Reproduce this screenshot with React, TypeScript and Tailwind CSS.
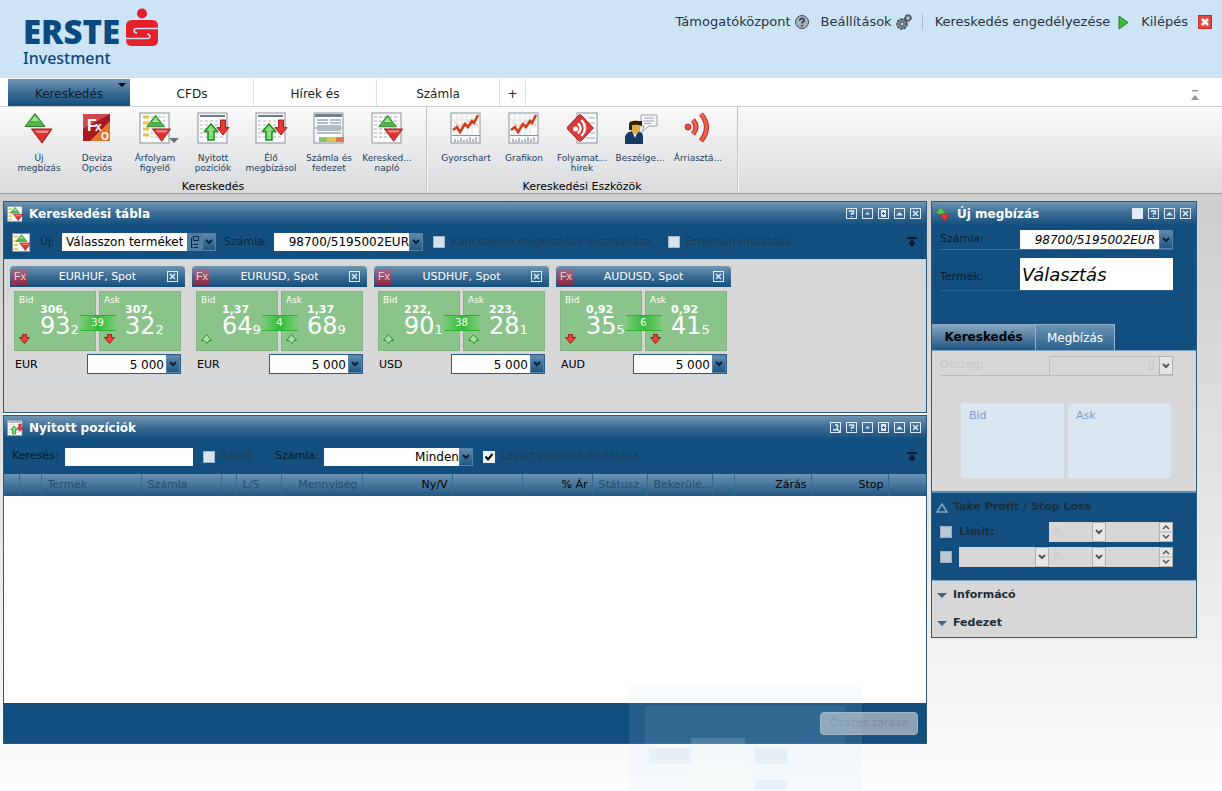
import type { ReactNode } from 'react';

const BLUE_BAR = 'bg-linear-to-b from-[#7096b3] via-[#3a6c94] to-[#124f7e]';

function Triangles() {
  return (
    <>
      <path d="M12 1.500 22 14.500H2z" fill="#4fb64c" stroke="#2a7d2a" strokeWidth="1" />
      <path d="M12 4 16 9 8 9z" fill="#a5e39b" />
      <path d="M8.500 17H29L19 31z" fill="#dd3030" stroke="#a01818" strokeWidth="1" />
      <path d="M12 18.500H26L24 21H14z" fill="#f58a80" />
    </>
  );
}

function Sheet({ children }: { children?: ReactNode }) {
  return (
    <>
      <rect x="1" y="1" width="29" height="30" fill="#fafafa" stroke="#8b9199" />
      {children}
    </>
  );
}

function PositionArrows() {
  return (
    <>
      <path d="M3 4H28" stroke="#6f7780" strokeWidth="2" />
      <path d="M3 9H28M3 13H28M3 17H28M3 21H28M3 25H28" stroke="#b3b8be" strokeDasharray="3 2" />
      <path d="M14 12 20.500 19.500H17V28H11V19.500H7.500z" fill="#86dd76" stroke="#1f8a24" strokeWidth="1.500" />
      <path d="M23.500 8H28.500V15.500H32L26 23 20 15.500H23.500z" fill="#e23a34" stroke="#a81d1d" />
    </>
  );
}

function ChartIcon() {
  return (
    <Sheet>
      <path d="M7 2V23M12 2V23M17 2V23M22 2V23M2 8H30M2 14H30" stroke="#dde1e5" />
      <path d="M4 10 10 14 18 9 28 13" fill="none" stroke="#f2b98a" />
      <path d="M3 18 7 15 10 20 15 12 18 15 22 9 24 11 28 3" fill="none" stroke="#cf3a1c" strokeWidth="2.500" />
      <path d="M2 23.500H30" stroke="#8b9199" />
      <path d="M5 30V27M8 30V28M11 30V26M14 30V28M17 30V27M20 30V25M23 30V27M26 30V25" stroke="#6f7c8a" />
    </Sheet>
  );
}

function ToolIcon({ name }: { name: string }) {
  return (
    <svg viewBox="0 0 36 32" className="h-8 w-9 shrink-0" aria-hidden="true">
      <g transform="translate(2 0)">
        {name === 'order' && <Triangles />}
        {name === 'fx' && (
          <>
            <rect x="2" y="2" width="27" height="27" fill="#a91722" />
            <path d="M2 2H29L2 17z" fill="#cf4a4e" />
            <path d="M29 9V29H9z" fill="#e8742c" />
            <text x="6" y="19" fontSize="16" fontWeight="700" fill="#fff" fontFamily="Liberation Sans, sans-serif">F</text>
            <text x="14" y="19" fontSize="12" fontWeight="700" fill="#fff" fontFamily="Liberation Sans, sans-serif">x</text>
            <text x="20" y="28" fontSize="10" fontWeight="700" fill="#fff" fontFamily="Liberation Sans, sans-serif">O</text>
          </>
        )}
        {name === 'watch' && (
          <Sheet>
            <path d="M4 5H10M4 11H10M4 17H10M4 23H10" stroke="#eac24a" strokeWidth="3" />
            <path d="M12 5H28M12 9H28M12 13H28M12 17H28M12 21H28M12 25H28" stroke="#a8adb3" strokeDasharray="2 2" />
            <g transform="translate(6 2) scale(0.880)"><Triangles /></g>
          </Sheet>
        )}
        {name === 'positions' && <Sheet><PositionArrows /></Sheet>}
        {name === 'account' && (
          <Sheet>
            <rect x="2" y="2" width="27" height="3" fill="#70808f" />
            <path d="M4 8H15M17 8H28M4 11H15M17 11H28M4 14H28M4 18H28M4 21H28" stroke="#9ba8b5" strokeWidth="1.500" />
            <path d="M2 16H29" stroke="#64788c" />
            <rect x="6" y="25" width="8" height="5" fill="#86c763" />
            <rect x="14" y="25" width="9" height="5" fill="#e3c64e" />
            <rect x="23" y="25" width="8" height="5" fill="#dd7a52" />
          </Sheet>
        )}
        {name === 'log' && (
          <Sheet>
            <path d="M3 5H28M3 9H28M3 13H28M3 17H28M3 21H28M3 25H28" stroke="#a4aab1" strokeDasharray="3 2" />
            <g transform="translate(6 2) scale(0.880)"><Triangles /></g>
          </Sheet>
        )}
        {name === 'chart' && <ChartIcon />}
        {name === 'news' && (
          <>
            <rect x="11" y="1" width="20" height="30" fill="#fafafa" stroke="#8b9199" />
            <path d="M23 6H29M24 11H29M26 16H29M24 21H29M20 26H29" stroke="#a4aab1" />
            <path d="M12.500 3.500Q14 2 15.500 3.500L26 14.500Q27.500 16 26 17.500L15.500 28.500Q14 30 12.500 28.500L2 17.500Q.5 16 2 14.500z" fill="#d93a3a" stroke="#a01f22" />
            <circle cx="9.500" cy="17" r="2.500" fill="#fff" />
            <path d="M12 11.500Q17 16 12 21.500M15.500 8Q22.500 16 15.500 24" fill="none" stroke="#fff" strokeWidth="2.500" />
          </>
        )}
        {name === 'chat' && (
          <>
            <path d="M17 3H33V14H25L18 20 20 14H17z" fill="#f3f4f5" stroke="#9da2a8" />
            <path d="M20 6H30M20 9H30M20 11.500H27" stroke="#9da2a8" />
            <path d="M1 32V25Q2 20 8 19H14Q19 20 19 25V32z" fill="#173c63" />
            <path d="M8 19 11 26 14 19z" fill="#e8eef3" />
            <ellipse cx="11.500" cy="15" rx="5" ry="7" fill="#e0a64a" />
            <path d="M5 18V12Q5 9 10 9H18V14Q14 12 8 13V18z" fill="#2d2410" />
          </>
        )}
        {name === 'alert' && (
          <>
            <circle cx="6" cy="15" r="3" fill="#e25247" stroke="#b32a22" />
            <path d="M11 8Q17 15 11 22" fill="none" stroke="#b9301f" strokeWidth="5" />
            <path d="M11 8Q17 15 11 22" fill="none" stroke="#ee6152" strokeWidth="3" />
            <path d="M19 2Q30 15 19 29" fill="none" stroke="#b9301f" strokeWidth="5" />
            <path d="M19 2Q30 15 19 29" fill="none" stroke="#ee6152" strokeWidth="3" />
          </>
        )}
      </g>
    </svg>
  );
}

type SmallIconKind = 'watch' | 'positions' | 'order';

function SmallIcon({ kind, large }: { kind: SmallIconKind; large?: boolean }) {
  return (
    <svg viewBox="0 0 32 32" className={large ? 'h-[19px] w-[19px] shrink-0' : 'h-4 w-4 shrink-0'} aria-hidden="true">
      {kind === 'watch' && (
        <Sheet>
          <path d="M3 6H10M3 13H10M3 20H10M3 27H10" stroke="#eac24a" strokeWidth="3" />
          <g transform="translate(5 1) scale(0.920)"><Triangles /></g>
        </Sheet>
      )}
      {kind === 'positions' && <Sheet><PositionArrows /></Sheet>}
      {kind === 'order' && (
        <>
          <path d="M11 3 21 14 11 17 2 14z" fill="#5cc453" stroke="#2a7d2a" />
          <path d="M10 18 19 15 28 18 19 30z" fill="#e23a34" stroke="#a01818" />
        </>
      )}
    </svg>
  );
}

type GlyphName = 'reset' | 'help' | 'up' | 'plus' | 'fold' | 'close' | 'blank';

function WindowButton({ glyph, label }: { glyph: GlyphName; label: string }) {
  return (
    <button type="button" aria-label={label} className="h-[11px] w-[11px]">
      <svg viewBox="0 0 11 11" className="h-full w-full" fill="none" stroke="#dcebf7">
        <rect x=".5" y=".5" width="10" height="10" fill={glyph === 'blank' ? '#e4eaf0' : 'none'} />
        {glyph === 'reset' && <path d="M3 7.500Q7 9 7.500 5.500T5 3M7 7L10 10" strokeWidth="1.500" />}
        {glyph === 'help' && <path d="M3.500 4V3H7.500V5.500H5.500V7M5.500 8V9" strokeWidth="1.300" />}
        {glyph === 'up' && <path d="M3 6.500H8L5.500 4z" fill="#dcebf7" stroke="none" />}
        {glyph === 'plus' && (
          <>
            <path d="M3 2H8V9H3z" fill="#dcebf7" stroke="none" />
            <path d="M4 5.500H7M5.500 4V7" stroke="#1d5683" />
          </>
        )}
        {glyph === 'fold' && <path d="M2 7.500H9L5.500 4z" fill="#dcebf7" stroke="none" />}
        {glyph === 'close' && <path d="M3 3 8 8M8 3 3 8" strokeWidth="1.500" />}
      </svg>
    </button>
  );
}

const glyphLabels: Record<GlyphName, string> = {
  reset: 'Visszaállítás',
  help: 'Súgó',
  up: 'Kis méret',
  plus: 'Új ablak',
  fold: 'Összecsukás',
  close: 'Bezárás',
  blank: 'Csoport',
};

function TitleBar({ icon, title, glyphs }: { icon: SmallIconKind; title: string; glyphs: GlyphName[] }) {
  return (
    <header className={`flex h-[23px] items-center gap-1.5 pr-[5px] pl-[3px] ${BLUE_BAR}`}>
      <SmallIcon kind={icon} />
      <h2 className="flex-1 text-[12px] font-bold text-white">{title}</h2>
      <div className="flex gap-[5px]">
        {glyphs.map((glyph) => (
          <WindowButton key={glyph} glyph={glyph} label={glyphLabels[glyph]} />
        ))}
      </div>
    </header>
  );
}

function Chevron({ dim }: { dim?: boolean }) {
  return (
    <span
      aria-hidden="true"
      className={`pointer-events-none flex w-3.5 shrink-0 items-center justify-center self-stretch border ${
        dim ? 'border-[#b4b4b4] bg-[#e6e6e6]' : 'border-[#5583a6] bg-linear-to-b from-[#5f8bad] to-[#1d5683]'
      }`}
    >
      <svg viewBox="0 0 8 6" className="h-1.5 w-2" fill="none" stroke={dim ? '#555' : '#06213c'} strokeWidth="2">
        <path d="M1 1 4 4 7 1" />
      </svg>
    </span>
  );
}

function CollapseToolbar() {
  return (
    <button type="button" aria-label="Eszköztár elrejtése" className="mr-px ml-auto">
      <svg viewBox="0 0 10 10" className="h-2.5 w-2.5" fill="#061a35">
        <path d="M0 0H10V2H0zM5 2 9 7H7V9H3V7H1z" />
      </svg>
    </button>
  );
}

function FxBadge() {
  return (
    <span className="flex h-4 w-4 items-center justify-center bg-linear-to-b from-[#a06b85] to-[#8b2648] font-['Liberation_Sans',sans-serif] text-[11px] text-[#e3d3de]">
      Fx
    </span>
  );
}

function Trend({ up }: { up: boolean }) {
  return (
    <svg viewBox="0 0 11 10" className="h-2.5 w-[11px]" aria-hidden="true">
      {up ? (
        <path d="M5.500 .5 10.500 6.500H8L6 9.500 3 6.500H.5z" fill="#a4e596" stroke="#2f8d35" />
      ) : (
        <path d="M3.500 .5H7.500V3.500H10.500L5.500 9.500 .5 3.500H3.500z" fill="#e8443a" stroke="#9c1d1a" />
      )}
    </svg>
  );
}

type Price = { big: string; mid: string; pip: string };

function PriceTile({ side, price, up }: { side: string; price: Price; up: boolean }) {
  return (
    <button type="button" className="flex h-[60px] flex-1 border border-[#86b384] bg-[#8bc48a] text-left text-white">
      <span className="flex h-full w-[25px] flex-col justify-between pt-[3px] pb-1.5 pl-1">
        <span className="text-[9px] leading-[10px]">{side}</span>
        <Trend up={up} />
      </span>
      <span className="flex flex-col pt-3">
        <span className="text-[11px] leading-[11px] font-bold">{price.big}</span>
        <span className="text-[24px] leading-[22px] whitespace-nowrap">
          {price.mid}
          <span className="text-[13px]">{price.pip}</span>
        </span>
      </span>
    </button>
  );
}

type Quote = { pair: string; currency: string; spread: string; up: boolean; bid: Price; ask: Price };

const quotes: Quote[] = [
  { pair: 'EURHUF', currency: 'EUR', spread: '39', up: false, bid: { big: '306,', mid: '93', pip: '2' }, ask: { big: '307,', mid: '32', pip: '2' } },
  { pair: 'EURUSD', currency: 'EUR', spread: '4', up: true, bid: { big: '1,37', mid: '64', pip: '9' }, ask: { big: '1,37', mid: '68', pip: '9' } },
  { pair: 'USDHUF', currency: 'USD', spread: '38', up: true, bid: { big: '222,', mid: '90', pip: '1' }, ask: { big: '223,', mid: '28', pip: '1' } },
  { pair: 'AUDUSD', currency: 'AUD', spread: '6', up: false, bid: { big: '0,92', mid: '35', pip: '5' }, ask: { big: '0,92', mid: '41', pip: '5' } },
];

function QuoteCard({ quote }: { quote: Quote }) {
  const amountId = `amount-${quote.pair}`;
  return (
    <article className="w-[175px] border-b border-[#cfdce6] pb-1">
      <header className={`flex h-[21px] items-center rounded-t-sm pr-[7px] pl-0.5 ${BLUE_BAR}`}>
        <FxBadge />
        <h3 className="flex-1 pt-0.5 text-center text-[11px] text-white">{quote.pair}, Spot</h3>
        <WindowButton glyph="close" label={glyphLabels.close} />
      </header>
      <div className="relative mt-1 flex gap-[3px] px-1">
        <PriceTile side="Bid" price={quote.bid} up={quote.up} />
        <PriceTile side="Ask" price={quote.ask} up={quote.up} />
        <span className="absolute top-6 left-1/2 h-4 w-9 -translate-x-1/2 border-y border-[#2eb22e] bg-linear-to-r from-[#7ccb7a] via-[#2bbd33] to-[#7ccb7a] text-center text-[10px] leading-[14px] text-white">
          {quote.spread}
        </span>
      </div>
      <div className="mt-[3px] flex items-center justify-between pr-1 pl-[5px]">
        <label htmlFor={amountId} className="pt-0.5 text-[11px]">{quote.currency}</label>
        <div className="flex h-5 w-[94px] border border-[#2a5d87] bg-white">
          <input id={amountId} defaultValue="5 000" className="w-full min-w-0 flex-1 px-0.5 pt-px text-right text-[12px]" />
          <Chevron />
        </div>
      </div>
    </article>
  );
}

const groups = [
  {
    title: 'Kereskedés',
    tools: [
      { icon: 'order', lines: ['Új', 'megbízás'] },
      { icon: 'fx', lines: ['Deviza', 'Opciós'] },
      { icon: 'watch', lines: ['Árfolyam', 'figyelő'], menu: true },
      { icon: 'positions', lines: ['Nyitott', 'pozíciók'] },
      { icon: 'positions', lines: ['Élő', 'megbízásol'] },
      { icon: 'account', lines: ['Számla és', 'fedezet'] },
      { icon: 'log', lines: ['Keresked...', 'napló'] },
    ],
  },
  {
    title: 'Kereskedési Eszközök',
    tools: [
      { icon: 'chart', lines: ['Gyorschart'] },
      { icon: 'chart', lines: ['Grafikon'] },
      { icon: 'news', lines: ['Folyamat...', 'hírek'] },
      { icon: 'chat', lines: ['Beszélge...'] },
      { icon: 'alert', lines: ['Árriasztá...'] },
    ],
  },
];

function Ribbon() {
  return (
    <div className="flex h-[87px] border-b border-[#9b9b9b] bg-linear-to-b from-[#fafafa] to-[#d9dadc]">
      {groups.map((group) => (
        <section key={group.title} className="flex flex-col border-r border-[#c3c6ca] px-2.5 pt-[5px] shadow-[1px_0_0_#f4f4f4]">
          <div className="flex h-[69px]">
            {group.tools.map((tool) => (
              <button key={tool.lines.join(' ')} type="button" className="relative flex w-[58px] flex-col items-center gap-[9px] text-[#1d3e5c]">
                <ToolIcon name={tool.icon} />
                <span className="text-[9px] leading-[10px] whitespace-nowrap">
                  {tool.lines.map((line) => (
                    <span key={line} className="block">{line}</span>
                  ))}
                </span>
                {'menu' in tool && (
                  <span className="absolute top-[26px] right-[5px] border-x-5 border-t-5 border-x-transparent border-t-[#6a7079]" />
                )}
              </button>
            ))}
          </div>
          <h2 className="text-center text-[11px] leading-3">{group.title}</h2>
        </section>
      ))}
    </div>
  );
}

function Logo() {
  return (
    <a href="#" aria-label="Erste Investment" className="flex items-start gap-1.5 pt-2 pl-[23px] text-[#0b4a80]">
      <span className="flex flex-col pt-1.5">
        <span className="font-['Open_Sans',sans-serif] text-[33px] leading-[36px] font-extrabold">ERSTE</span>
        <span className="font-['Noto_Sans',sans-serif] text-[16px] leading-4 font-medium">Investment</span>
      </span>
      <svg viewBox="0 0 32 38" className="h-[38px] w-8" fill="#e5202b">
        <circle cx="16" cy="5.500" r="5" />
        <path d="M6 12H26Q32 12 32 18V32Q32 38 26 38H6Q0 38 0 32V18Q0 12 6 12z" />
        <path d="M32 20.500H11Q8 20.500 8 22.500T11 25" fill="none" stroke="#cce4f6" strokeWidth="1.600" />
        <path d="M0 30.500H21Q24 30.500 24 28.500T21 26" fill="none" stroke="#cce4f6" strokeWidth="1.600" />
      </svg>
    </a>
  );
}

function TopBar() {
  return (
    <header className="flex h-[78px] items-start justify-between bg-[#cce4f6]">
      <Logo />
      <nav className="flex items-center pt-[13px] pr-2.5 text-[13px] leading-[18px] text-[#273442]">
        <a href="#" className="flex items-center gap-1">
          Támogatóközpont
          <svg viewBox="0 0 14 14" className="h-3.5 w-3.5">
            <circle cx="7" cy="7" r="6.500" fill="#a5b2be" stroke="#3f4b57" />
            <path d="M4.500 5.500Q5 3 7.500 3.500T8.500 6.500Q7 7 7 8.500M7 10V11.500" fill="none" stroke="#222c38" strokeWidth="1.500" />
          </svg>
        </a>
        <a href="#" className="ml-3 flex items-center gap-1">
          Beállítások
          <svg viewBox="0 0 16 16" className="h-4 w-4">
            <circle cx="6" cy="10" r="5" fill="#7d8894" stroke="#3b4652" strokeWidth="1.500" strokeDasharray="2.500 1" />
            <circle cx="6" cy="10" r="2" fill="#cfd9e2" stroke="#3b4652" />
            <circle cx="12" cy="4" r="3" fill="#7d8894" stroke="#3b4652" strokeWidth="1.500" strokeDasharray="2 .8" />
            <circle cx="12" cy="4" r="1" fill="#e1e9f0" />
          </svg>
        </a>
        <span className="mr-3 ml-2.5 h-4 w-px bg-[#a7bccc]" />
        <button type="button" className="flex items-center gap-2">
          Kereskedés engedélyezése
          <svg viewBox="0 0 11 15" className="h-[15px] w-[11px]">
            <path d="M1 1 10 7.500 1 14z" fill="#3fbb3b" stroke="#237f25" />
          </svg>
        </button>
        <button type="button" className="ml-3 flex items-center gap-2.5">
          Kilépés
          <svg viewBox="0 0 14 14" className="h-3.5 w-3.5">
            <rect x=".5" y=".5" width="13" height="13" fill="#e24a41" stroke="#c02a25" />
            <path d="M4 4 10 10M10 4 4 10" stroke="#fff" strokeWidth="2.500" />
          </svg>
        </button>
      </nav>
    </header>
  );
}

function WorkspaceTabs() {
  return (
    <nav className="flex h-[29px] items-stretch border-b border-[#c9ccd0] bg-white pt-px pl-2 text-[12px] text-[#222]">
      <button type="button" className={`relative mr-px w-[122px] pt-0.5 text-[#0a1c30] ${BLUE_BAR}`}>
        Kereskedés
        <span className="absolute top-1 right-1 border-x-4 border-t-4 border-x-transparent border-t-black" />
      </button>
      {['CFDs', 'Hírek és', 'Számla'].map((tab) => (
        <button key={tab} type="button" className="w-[123px] border-r border-[#d3e3ef] pt-0.5">
          {tab}
        </button>
      ))}
      <button type="button" className="w-[26px] border-r border-[#d3e3ef] pt-0.5">+</button>
      <button type="button" aria-label="Szalag elrejtése" className="mr-[23px] ml-auto pt-1">
        <svg viewBox="0 0 8 10" className="h-2.5 w-2" fill="#8996a5">
          <path d="M1 0H7V1.500H1zM4 5 8 10H0z" />
        </svg>
      </button>
    </nav>
  );
}

function TradingBoard() {
  return (
    <section className="flex h-[212px] flex-col border border-[#2b5a80] bg-[#d7d7d8]">
      <TitleBar icon="watch" title="Kereskedési tábla" glyphs={['help', 'up', 'plus', 'fold', 'close']} />
      <div className="flex h-[35px] items-center border-b border-[#b9d2e6] bg-[#124f7e] px-2 text-[11px] text-[#0a2642]">
        <SmallIcon kind="watch" large />
        <label htmlFor="product" className="w-[31px] pl-[9px]">Új:</label>
        <div className="flex h-[18px] w-[154px] items-center">
          <input id="product" defaultValue="Válasszon terméket" className="h-full w-[125px] bg-white px-1 text-[12px] text-black" />
          <button type="button" aria-label="Termékfa" className="flex h-full w-[15px] items-center justify-center bg-[#4f7fa4]">
            <svg viewBox="0 0 10 14" className="h-3.5 w-2.5" fill="none" stroke="#0b2742">
              <path d="M3 1.500H8.500V5.500H3.500zM1.500 3V13M1.500 9.500H3M1.500 12.500H3M4 9.500H8M4 12.500H8" />
            </svg>
          </button>
          <Chevron />
        </div>
        <label htmlFor="board-account" className="ml-2 w-[50px]">Számla:</label>
        <div className="flex h-[18px] w-[149px]">
          <select id="board-account" className="h-full w-[135px] appearance-none bg-white text-right text-[12px] text-black [text-align-last:right]">
            <option>98700/5195002EUR</option>
          </select>
          <Chevron />
        </div>
        <label className="ml-2.5 flex w-[235px] items-center gap-1.5 text-[#1c3b55]">
          <input type="checkbox" className="h-3 w-3 appearance-none border border-[#9db7cc] bg-[#d6e2ee]" />
          Kapcsolódó megbízások hozzáadása
        </label>
        <label className="flex items-center gap-1.5 text-[#1c3b55]">
          <input type="checkbox" className="h-3 w-3 appearance-none border border-[#9db7cc] bg-[#d6e2ee]" />
          Értéknap mutatása
        </label>
        <CollapseToolbar />
      </div>
      <div className="flex flex-wrap gap-[7px] px-1.5 pt-1.5">
        {quotes.map((quote) => (
          <QuoteCard key={quote.pair} quote={quote} />
        ))}
      </div>
    </section>
  );
}

const columns = [
  { id: 'a', width: 'w-[15px]', label: '' },
  { id: 'b', width: 'w-[22px]', label: '' },
  { id: 'c', width: 'w-[100px]', label: 'Termék', dim: true },
  { id: 'd', width: 'w-[80px]', label: 'Számla', dim: true },
  { id: 'e', width: 'w-[15px]', label: '' },
  { id: 'f', width: 'w-[45px]', label: 'L/S', dim: true },
  { id: 'g', width: 'w-[81px]', label: 'Mennyiség', dim: true, right: true },
  { id: 'h', width: 'w-[90px]', label: 'Ny/V', right: true },
  { id: 'i', width: 'w-[70px]', label: '' },
  { id: 'j', width: 'w-[70px]', label: '% Ár', right: true },
  { id: 'k', width: 'w-[55px]', label: 'Státusz', dim: true },
  { id: 'l', width: 'w-[65px]', label: 'Bekerülé...', dim: true },
  { id: 'm', width: 'w-[22px]', label: '' },
  { id: 'n', width: 'w-[77px]', label: 'Zárás', right: true },
  { id: 'o', width: 'w-[77px]', label: 'Stop', right: true },
  { id: 'p', width: '', label: '' },
];

function OpenPositions() {
  return (
    <section className="flex h-[329px] flex-col border border-[#2b5a80] bg-white">
      <TitleBar icon="positions" title="Nyitott pozíciók" glyphs={['reset', 'help', 'up', 'plus', 'fold', 'close']} />
      <div className="flex h-[35px] items-center bg-[#124f7e] px-2 text-[11px] text-[#06182b]">
        <label htmlFor="search" className="w-[53px]">Keresés:</label>
        <input id="search" className="h-[18px] w-32 bg-white px-1 text-[12px] text-black" />
        <label className="ml-2.5 flex items-center gap-1.5 text-[#1c3b55]">
          <input type="checkbox" className="h-3 w-3 appearance-none border border-[#9db7cc] bg-[#d6e2ee]" />
          Szűrő
        </label>
        <label htmlFor="filter-account" className="ml-[23px] w-[49px]">Számla:</label>
        <div className="flex h-[18px] w-[149px]">
          <select id="filter-account" className="h-full w-[135px] appearance-none bg-white text-right text-[12px] text-black [text-align-last:right]">
            <option>Minden</option>
          </select>
          <Chevron />
        </div>
        <label className="ml-2.5 flex items-center gap-1.5 text-[#1c3b55]">
          <span className="grid">
            <input type="checkbox" defaultChecked className="peer col-start-1 row-start-1 h-3 w-3 appearance-none bg-[#eef3f8]" />
            <svg viewBox="0 0 12 12" className="pointer-events-none col-start-1 row-start-1 hidden h-3 w-3 peer-checked:block" fill="none" stroke="#000" strokeWidth="2">
              <path d="M2.500 5.500 5 8.500 9.500 3" />
            </svg>
          </span>
          Lezárt pozíciók mutatása
        </label>
        <CollapseToolbar />
      </div>
      <div className="flex-1">
        <table className="w-full table-fixed border-collapse text-[11px]">
          <thead>
            <tr className="h-[22px] bg-linear-to-b from-[#6b93b3] to-[#1f5783]">
              {columns.map((col) => (
                <th
                  key={col.id}
                  scope="col"
                  className={`border-r border-[#346a96] font-normal whitespace-nowrap last:border-r-0 ${col.width} ${
                    col.right ? 'pr-1 text-right' : 'text-left'
                  } ${col.label && !col.right ? 'pl-1.5' : ''} ${col.dim ? 'text-[#274f75]' : 'text-black'}`}
                >
                  {col.label}
                </th>
              ))}
            </tr>
          </thead>
        </table>
      </div>
      <footer className="flex h-10 items-center justify-end bg-[#124f7e] pr-2">
        <button type="button" disabled className="h-[23px] w-[98px] rounded-sm border border-[#a3b4c2] bg-[#8ea2b3] text-[11px] text-[#7b8fa1]">
          Összes zárása
        </button>
      </footer>
    </section>
  );
}

function StopRow({ label, id }: { label?: string; id: string }) {
  const field = 'h-full appearance-none bg-[#d7d7d8] px-1 text-[11px] text-[#c8c8c9]';
  return (
    <div className="flex h-5 items-center">
      <input type="checkbox" aria-label={label ?? 'Stop'} disabled className="h-3 w-3 appearance-none border border-[#9aafc1] bg-[#b9c8d5]" />
      {label ? (
        <label htmlFor={id} className="ml-[7px] w-[90px] text-[11px] font-bold text-[#1c3040]">{label}</label>
      ) : (
        <div className="ml-[7px] flex h-full w-[90px]">
          <select aria-label="Stop típusa" disabled className={`${field} min-w-0 flex-1`} />
          <Chevron dim />
        </div>
      )}
      <div className="flex h-full w-[57px]">
        <select id={id} aria-label={label ? undefined : 'Egység'} disabled className={`${field} min-w-0 flex-1`}>
          <option>%</option>
        </select>
        <Chevron dim />
      </div>
      <input aria-label="Érték" disabled className={`${field} min-w-0 flex-1`} />
      <svg viewBox="0 0 14 20" className="h-5 w-3.5 bg-[#e6e6e6]" fill="none" stroke="#555" strokeWidth="1.500">
        <path d="M4 7 7 4 10 7M4 13 7 16 10 13" />
        <path d="M0 10H14M.5 0V20M13.500 0V20M0 .5H14M0 19.500H14" stroke="#b4b4b4" strokeWidth="1" />
      </svg>
    </div>
  );
}

function NewOrder() {
  return (
    <section className="flex w-[266px] flex-col border border-[#2b5a80] bg-[#124f7e]">
      <TitleBar icon="order" title="Új megbízás" glyphs={['blank', 'help', 'fold', 'close']} />
      <div className="flex h-[99px] flex-col gap-2 pt-[5px] pr-[23px] pl-2 text-[11px] text-[#081d33]">
        <div className="flex h-5 items-center border-b border-[#3b6f97]">
          <label htmlFor="order-account" className="flex-1">Számla:</label>
          <select id="order-account" className="h-full w-[139px] appearance-none bg-white pr-1 text-right text-[12px] text-black italic [text-align-last:right]">
            <option>98700/5195002EUR</option>
          </select>
          <Chevron />
        </div>
        <div className="flex h-[33px] items-center border-b border-[#2a628d]">
          <label htmlFor="order-product" className="flex-1 pt-1.5">Termék:</label>
          <input id="order-product" defaultValue="Választás" className="h-full w-[153px] bg-white px-0.5 text-[18px] text-black italic" />
        </div>
      </div>
      <div className="flex h-[27px] border-b border-[#7ea5c4] text-[12px]">
        <button type="button" className="w-[104px] border-r border-[#8fb2cd] bg-linear-to-b from-[#8aa9c1] to-[#1d5683] font-bold text-black">Kereskedés</button>
        <button type="button" className="w-[79px] border-t border-r border-[#8fb2cd] bg-linear-to-b from-[#6a93b3] to-[#2a628d] text-white">Megbízás</button>
      </div>
      <div className="flex h-[142px] flex-col border-b-2 border-[#5c8db3] bg-[#d7d7d8] pt-[5px] pr-[23px] pl-2">
        <div className="flex h-5 items-center border-b border-[#bdbdbe] text-[11px] text-[#c6c6c7]">
          <label htmlFor="quantity" className="flex-1">Összeg:</label>
          <input id="quantity" disabled defaultValue="0" className="h-full w-[110px] border-t border-l border-[#bdbdbe] pr-1 text-right" />
          <Chevron dim />
        </div>
        <div className="mt-[27px] flex h-[75px] gap-1 pr-0.5 pl-[21px] text-[11px] text-[#7f9cc8]">
          {['Bid', 'Ask'].map((side) => (
            <button key={side} type="button" disabled className="flex flex-1 bg-[#d9e6f1] px-2 pt-[5px]">{side}</button>
          ))}
        </div>
      </div>
      <div className="flex h-[88px] flex-col gap-[5px] border-b border-[#7ea5c4] pt-[5px] pr-[23px] pl-2">
        <button type="button" className="-ml-1 flex h-[19px] items-center gap-[5px] text-[11px] font-bold text-[#1c3040]">
          <svg viewBox="0 0 12 10" className="h-2.5 w-3" fill="none" stroke="#7ea5c4" strokeWidth="1.500">
            <path d="M6 1 11 9H1z" />
          </svg>
          Take Profit / Stop Loss
        </button>
        <StopRow id="limit-unit" label="Limit:" />
        <StopRow id="stop-unit" />
      </div>
      <div className="flex flex-col bg-[#d7d7d8]">
        {['Informácó', 'Fedezet'].map((title) => (
          <button key={title} type="button" className="flex h-7 items-center gap-1.5 pl-[5px] text-[11px] font-bold text-[#222c36]">
            <span className="border-x-5 border-t-5 border-x-transparent border-t-[#3f6587]" />
            {title}
          </button>
        ))}
      </div>
    </section>
  );
}

// Translucent preview of a window that is being dragged near the bottom edge.
function DragGhost() {
  return (
    <div aria-hidden="true" className="pointer-events-none absolute bottom-0 left-[629px] h-[105px] w-[233px] bg-[#c4e0f7]/10">
      <div className="absolute top-5 left-4 h-[38px] w-[200px] bg-[#7fb0d6]/15" />
      <div className="absolute top-[62px] left-5 h-4 w-[42px] bg-[#a9cbe4]/15" />
      <div className="absolute top-[52px] left-[62px] h-[53px] w-[54px] bg-white/15" />
      <div className="absolute top-[62px] left-[126px] h-4 w-8 bg-[#a9cbe4]/20" />
      <div className="absolute top-[94px] left-[126px] h-2.5 w-8 bg-[#a9cbe4]/20" />
    </div>
  );
}

export default function App() {
  return (
    <div className="relative flex min-h-screen flex-col bg-white font-['DejaVu_Sans',Verdana,sans-serif] text-black">
      <TopBar />
      <WorkspaceTabs />
      <Ribbon />
      <main className="flex flex-1 items-start gap-1 bg-linear-to-b from-[#cdcdce] via-[#e4e4e5] to-[#fdfdfd] pt-[7px] pr-[25px] pl-[3px]">
        <div className="flex min-w-0 flex-1 flex-col gap-0.5 bg-white pb-px">
          <TradingBoard />
          <OpenPositions />
        </div>
        <NewOrder />
      </main>
      <DragGhost />
    </div>
  );
}
